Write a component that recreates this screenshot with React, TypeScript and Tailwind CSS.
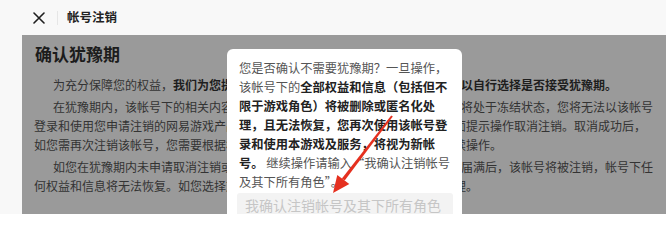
import React from "react";

const Line = ({ indent, children }: { indent?: boolean; children: React.ReactNode }) => (
  <div className={indent ? "whitespace-nowrap pl-[19px]" : "whitespace-nowrap"}>{children}</div>
);

export default function App() {
  return (
    <div className="relative w-[666px] h-[214px] overflow-hidden bg-[#f8f8f8] font-['Noto_Sans_CJK_SC',sans-serif]">
      {/* header */}
      <div className="h-[35px] flex items-center pl-[33px]">
        <svg width="12" height="12" viewBox="0 0 12 12" className="shrink-0">
          <path d="M1 1 L11 11 M11 1 L1 11" stroke="#1f1f1f" strokeWidth="1.6" strokeLinecap="round" />
        </svg>
        <div className="ml-[12px] w-px h-[14px] bg-[#e6e6e6]" />
        <div className="ml-[9px] text-[12.5px] font-bold text-[#222] leading-none">帐号注销</div>
      </div>

      {/* body */}
      <div className="flex h-[179px]">
        <div className="w-[22px] shrink-0" />
        <div className="flex-1 bg-[#9a9a9a] pl-[12px] pt-[7px] text-[12px] leading-[19px] text-[#333]">
          <div className="text-[17px] leading-[24px] font-bold text-[#1c1c1c] pl-[1px]">确认犹豫期</div>
          <div className="mt-[9px]">
            <Line indent>
              为充分保障您的权益，
              <span className="font-bold text-[#1e1e1e]">我们为您提供了犹豫期服务，您在申请注销帐号时均可以自行选择是否接受犹豫期。</span>
            </Line>
          </div>
          <div className="mt-[3px]">
            <Line indent>在犹豫期内，该帐号下的相关内容（包括游戏角色、虚拟道具等全部信息）均将处于冻结状态，您将无法以该帐号</Line>
            <Line>登录和使用您申请注销的网易游戏产品及服务。您可在犹豫期内登录该帐号按页面提示操作取消注销。取消成功后，</Line>
            <Line>如您需再次注销该帐号，您需要根据相关页面提示，重新提交注销申请并完成后续操作。</Line>
          </div>
          <div className="mt-[3px]">
            <Line indent>如您在犹豫期内未申请取消注销或取消失败的，则在犹豫期（十五个自然日）届满后，该帐号将被注销，帐号下任</Line>
            <Line>何权益和信息将无法恢复。如您选择放弃犹豫期，帐号将在确认后立即被注销处理。</Line>
          </div>
        </div>
      </div>

      {/* modal */}
      <div className="absolute left-[227px] top-[49px] w-[235px] h-[180px] bg-white rounded-[6px] px-[10px] pt-[10px]">
        <div className="pl-[2px] text-[12.25px] leading-[19px] text-[#555] whitespace-nowrap">
          您是否确认不需要犹豫期？一旦操作，
          <br />
          该帐号下的<span className="font-bold text-[#222]">全部权益和信息（包括但不</span>
          <br />
          <span className="font-bold text-[#222]">限于游戏角色）将被删除或匿名化处</span>
          <br />
          <span className="font-bold text-[#222]">理，且无法恢复，您再次使用该帐号登</span>
          <br />
          <span className="font-bold text-[#222]">录和使用本游戏及服务，将视为新帐</span>
          <br />
          <span className="font-bold text-[#222]">号。</span> 继续操作请输入“我确认注销帐号
          <br />
          及其下所有角色”。
        </div>
        <input
          readOnly
          placeholder="我确认注销帐号及其下所有角色"
          className="mt-[1px] block w-[216px] h-[24px] rounded-[3px] bg-[#f3f3f3] pl-[8px] text-[14px] text-[#333] outline-none placeholder:text-[#c6c6c6] font-['Noto_Sans_CJK_SC',sans-serif]"
        />
      </div>

      {/* red arrow */}
      <svg className="absolute inset-0 pointer-events-none" width="666" height="214" viewBox="0 0 666 214">
        <polygon points="392.8,116.6 391.2,115.4 341.9,178.4 344.7,180.6" fill="#e5301f" />
        <polygon points="333,193 349.3,184.1 337.3,174.9" fill="#e5301f" />
      </svg>
    </div>
  );
}
